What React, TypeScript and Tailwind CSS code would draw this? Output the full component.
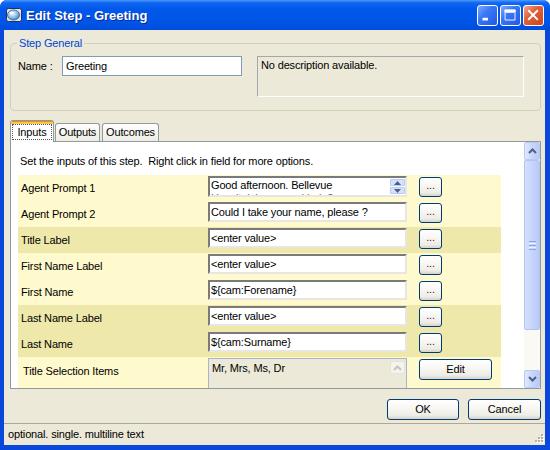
import React from 'react';

const ui = "font-['Liberation_Sans',Arial,sans-serif] text-[11px] tracking-[-0.15px] leading-[13px] text-black";

const btnBg =
  'bg-[linear-gradient(to_bottom,#FFFFFF_0%,#F7F6F2_45%,#EEEDE6_80%,#D8D3C8_100%)]';

function XpButton({ label, className }: { label: string; className: string }) {
  return (
    <div
      className={`flex items-center justify-center rounded-[3px] border border-[#003C74] ${btnBg} ${className}`}
    >
      {label}
    </div>
  );
}

function Caret({ dir, color = '#4D6185' }: { dir: 'up' | 'down'; color?: string }) {
  return (
    <svg width="9" height="6" viewBox="0 0 9 6">
      <path
        d={dir === 'up' ? 'M1 5 L4.5 1.5 L8 5' : 'M1 1 L4.5 4.5 L8 1'}
        fill="none"
        stroke={color}
        strokeWidth="2"
      />
    </svg>
  );
}

function TinyCaret({ dir }: { dir: 'up' | 'down' }) {
  return (
    <svg width="7" height="4" viewBox="0 0 7 4">
      <path d={dir === 'up' ? 'M0 4 L3.5 0 L7 4 Z' : 'M0 0 L3.5 4 L7 0 Z'} fill="#4D6185" />
    </svg>
  );
}

function AppIcon() {
  return (
    <svg width="16" height="16" viewBox="0 0 16 16">
      <defs>
        <radialGradient id="ico" cx="0.4" cy="0.35" r="0.7">
          <stop offset="0" stopColor="#F4FAFF" />
          <stop offset="0.5" stopColor="#9CC8F0" />
          <stop offset="1" stopColor="#3F78B8" />
        </radialGradient>
      </defs>
      <rect x="0.5" y="1.5" width="15" height="13" rx="2" fill="#D8E4F0" stroke="#24344E" />
      <ellipse cx="7.5" cy="8" rx="6" ry="5" fill="url(#ico)" stroke="#2C5A92" strokeWidth="0.8" />
      <ellipse cx="5.5" cy="6" rx="2" ry="1.2" fill="#FFFFFF" opacity="0.8" />
    </svg>
  );
}

function CaptionButton({ kind }: { kind: 'min' | 'max' | 'close' }) {
  const bg =
    kind === 'close'
      ? 'bg-[linear-gradient(135deg,#F3A98C_0%,#E2603A_40%,#CF4518_100%)]'
      : 'bg-[linear-gradient(135deg,#7EAAFF_0%,#3A77F6_40%,#2158E6_100%)]';
  return (
    <div className={`flex h-[21px] w-[21px] items-center justify-center rounded-[3px] border border-white ${bg}`}>
      <svg width="21" height="21" viewBox="0 0 21 21">
        {kind === 'min' && <rect x="5" y="13" width="6" height="3" fill="#FFFFFF" />}
        {kind === 'max' && (
          <path d="M4.5 4.5 H15.5 V15.5 H4.5 Z M5.5 7 H14.5" fill="none" stroke="#FFFFFF" strokeWidth="1" />
        )}
        {kind === 'max' && <rect x="4" y="4" width="12" height="3" fill="#FFFFFF" />}
        {kind === 'close' && (
          <path d="M5.5 5.5 L14.5 14.5 M14.5 5.5 L5.5 14.5" stroke="#FFFFFF" strokeWidth="2.2" strokeLinecap="square" />
        )}
      </svg>
    </div>
  );
}

function MainScrollbar() {
  const arrowBtn =
    'flex h-[18px] items-center justify-center rounded-[2px] border border-[#B7CAF5] bg-[linear-gradient(to_right,#E0E9FE_0%,#C6D6FB_50%,#B9CCF8_100%)]';
  return (
    <div className="flex w-[16px] flex-col bg-[#FAF9F4]">
      <div className={arrowBtn}>
        <Caret dir="up" />
      </div>
      <div className="flex h-[170px] items-center justify-center rounded-[2px] border border-[#B1C5F5] bg-[linear-gradient(to_right,#D4E0FD_0%,#C5D5FC_50%,#B8CAF7_100%)]">
        <div className="flex flex-col gap-[1px]">
          <div className="h-[1px] w-[7px] bg-[#8CA6E3]" />
          <div className="h-[1px] w-[7px] bg-[#EEF3FF]" />
          <div className="h-[1px] w-[7px] bg-[#8CA6E3]" />
          <div className="h-[1px] w-[7px] bg-[#EEF3FF]" />
          <div className="h-[1px] w-[7px] bg-[#8CA6E3]" />
        </div>
      </div>
      <div className="flex-1" />
      <div className={arrowBtn}>
        <Caret dir="down" />
      </div>
    </div>
  );
}

type Row = { label: string; value: string; dark: boolean; multi?: boolean };

const rows: Row[] = [
  { label: 'Agent Prompt 1', value: 'Good afternoon. Bellevue', dark: false, multi: true },
  { label: 'Agent Prompt 2', value: 'Could I take your name, please ?', dark: false },
  { label: 'Title Label', value: '<enter value>', dark: true },
  { label: 'First Name Label', value: '<enter value>', dark: false },
  { label: 'First Name', value: '${cam:Forename}', dark: false },
  { label: 'Last Name Label', value: '<enter value>', dark: true },
  { label: 'Last Name', value: '${cam:Surname}', dark: true },
];

const sunken =
  'border-2 border-t-[#7A7A7A] border-l-[#7A7A7A] border-b-[#E8E6DF] border-r-[#E8E6DF] bg-white';

function InputRow({ row }: { row: Row }) {
  return (
    <div className={`flex h-[26px] items-start pt-[1px] ${row.dark ? 'bg-[#EEE8AA]' : 'bg-[#FFFACD]'}`}>
      <div className="flex h-[24px] w-[190px] items-center pl-[3px]">{row.label}</div>
      {row.multi ? (
        <div className={`flex h-[21px] w-[199px] ${sunken}`}>
          <div className="h-[17px] flex-1 overflow-hidden pl-[1px] pt-[1px]">
            <div>{row.value}</div>
            <div className="text-[#6B6B6B]">Hospital, how may I help?</div>
          </div>
          <div className="flex w-[15px] flex-col gap-[1px] pt-[1px]">
            <div className="flex h-[7px] items-center justify-center rounded-[1px] border border-[#B7CAF5] bg-[#D6E1FB]">
              <TinyCaret dir="up" />
            </div>
            <div className="flex h-[7px] items-center justify-center rounded-[1px] border border-[#B7CAF5] bg-[#D6E1FB]">
              <TinyCaret dir="down" />
            </div>
          </div>
        </div>
      ) : (
        <div className={`flex h-[20px] w-[199px] items-center overflow-hidden whitespace-nowrap pl-[1px] ${sunken}`}>
          {row.value}
        </div>
      )}
      <XpButton label="..." className="ml-[12px] mt-[1px] h-[20px] w-[23px] pb-[3px] text-[#5A1030]" />
    </div>
  );
}

export default function App() {
  return (
    <div className={`h-[450px] w-[550px] bg-white ${ui}`}>
      <div className="flex h-[450px] flex-col rounded-t-[7px] bg-[#0A48DC]">
        {/* title bar */}
        <div className="flex h-[30px] items-center rounded-t-[7px] bg-[linear-gradient(to_bottom,#4A9BFF_0%,#1267F2_9%,#0058EB_30%,#0055E6_75%,#004BDB_100%)] pl-[6px] pr-[6px]">
          <AppIcon />
          <span className="ml-[4px] text-[13px] font-bold tracking-normal text-white [text-shadow:1px_1px_0_#0B2A8E]">
            Edit Step - Greeting
          </span>
          <div className="ml-auto flex gap-[2px]">
            <CaptionButton kind="min" />
            <CaptionButton kind="max" />
            <CaptionButton kind="close" />
          </div>
        </div>

        {/* client area */}
        <div className="ml-[4px] mr-[5px] flex h-[415px] flex-col bg-[#ECE9D8]">
          {/* group box */}
          <div className="relative ml-[6px] mr-[4px] mt-[13px] flex h-[68px] items-start rounded-[4px] border border-[#D0D0BF] pl-[7px] pt-[12px]">
            <span className="absolute left-[6px] top-[-7px] bg-[#ECE9D8] px-[2px] text-[#0046D5]">Step General</span>
            <div className="flex h-[20px] w-[44px] items-center">Name :</div>
            <div className="flex h-[20px] w-[180px] items-center border border-[#7F9DB9] bg-white pl-[3px]">
              Greeting
            </div>
            <div className="ml-[15px] h-[41px] w-[267px] border border-t-[#A7A6AA] border-l-[#A7A6AA] border-b-white border-r-white pl-[3px] pt-[2px]">
              No description available.
            </div>
          </div>

          {/* tabs */}
          <div className="ml-[6px] mt-[9px] flex h-[21px] items-end">
            <div className="relative z-10 mb-[-1px] flex h-[22px] w-[44px] flex-col overflow-hidden rounded-t-[3px] border border-b-0 border-[#919B9C] bg-white">
              <div className="h-[1px] bg-[#E68B2C]" />
              <div className="h-[2px] bg-[#FFC73C]" />
              <div className="mx-[1px] mt-[0px] flex h-[16px] items-center justify-center border border-dotted border-[#555555]">
                Inputs
              </div>
            </div>
            <div className="ml-[1px] flex h-[18px] w-[45px] items-center justify-center rounded-t-[3px] border border-b-0 border-[#919B9C] bg-[linear-gradient(to_bottom,#FFFFFF_0%,#F4F3EE_60%,#ECEBE4_100%)]">
              Outputs
            </div>
            <div className="ml-[2px] flex h-[18px] w-[57px] items-center justify-center rounded-t-[3px] border border-b-0 border-[#919B9C] bg-[linear-gradient(to_bottom,#FFFFFF_0%,#F4F3EE_60%,#ECEBE4_100%)]">
              Outcomes
            </div>
          </div>

          {/* tab page */}
          <div className="ml-[6px] mr-[4px] flex h-[248px] border border-[#919B9C] bg-white">
            <div className="flex-1 overflow-hidden pl-[7px]">
              <div className="h-[33px] whitespace-pre pl-[2px] pt-[13px]">
                Set the inputs of this step.  Right click in field for more options.
              </div>
              <div className="w-[483px]">
                {rows.map((r) => (
                  <InputRow key={r.label} row={r} />
                ))}
                <div className="flex h-[44px] items-start bg-[#FFFACD] pt-[1px]">
                  <div className="flex h-[26px] w-[190px] items-center pl-[5px]">Title Selection Items</div>
                  <div className="flex h-[42px] w-[199px] border border-[#A5B5CC] bg-[#ECE9D8]">
                    <div className="flex-1 pl-[3px] pt-[3px]">Mr, Mrs, Ms, Dr</div>
                    <div className="mr-[1px] mt-[2px] flex h-[13px] w-[15px] items-center justify-center rounded-[2px] border border-[#E6E4DA] bg-[#F4F3EE]">
                      <Caret dir="up" color="#C6C4BB" />
                    </div>
                  </div>
                  <XpButton label="Edit" className="ml-[12px] mt-[1px] h-[21px] w-[73px]" />
                </div>
              </div>
            </div>
            <MainScrollbar />
          </div>

          {/* dialog buttons */}
          <div className="mr-[4px] mt-[10px] flex justify-end gap-[9px]">
            <XpButton label="OK" className="h-[21px] w-[72px]" />
            <XpButton label="Cancel" className="h-[21px] w-[73px]" />
          </div>

          {/* status bar */}
          <div className="mt-[3px] flex h-[22px] items-center border-t border-[#ACA899] pl-[4px]">
            <span>optional. single. multiline text</span>
            <svg className="ml-auto mr-[1px] mt-[8px]" width="12" height="12" viewBox="0 0 12 12">
              {[
                [9, 1],
                [6, 4],
                [9, 4],
                [3, 7],
                [6, 7],
                [9, 7],
              ].map(([x, y]) => (
                <g key={`${x}-${y}`}>
                  <rect x={x + 1} y={y + 1} width="2" height="2" fill="#FFFFFF" />
                  <rect x={x} y={y} width="2" height="2" fill="#B5B1A2" />
                </g>
              ))}
            </svg>
          </div>
        </div>
        <div className="flex-1" />
      </div>
    </div>
  );
}
